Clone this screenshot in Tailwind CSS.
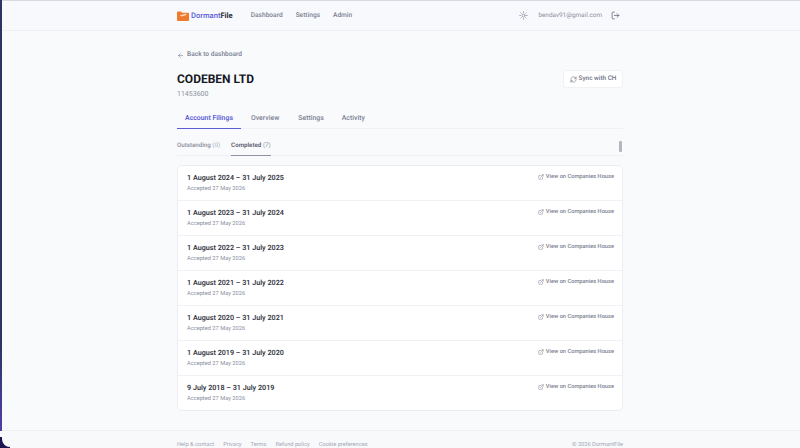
<!DOCTYPE html>
<html lang="en">
<head>
    <meta charset="UTF-8">
    <title>DormantFile</title>
    <script src="https://cdn.jsdelivr.net/npm/@tailwindcss/browser@4"></script>
</head>
<body class="bg-[#f9fafc] font-['Roboto',sans-serif] [text-rendering:geometricPrecision] antialiased overflow-hidden">
<div class="h-[448px] w-[800px] flex flex-col overflow-hidden relative">
    <div class="absolute left-0 top-0 w-[2px] h-[431px] bg-linear-to-b from-[#2b3564] via-[#2b3564] via-80% to-[#4f3fa8]"></div>

    <header class="h-[31px] shrink-0 bg-[#f8f9fc] border-t border-b border-t-[#d8dae2] border-b-[#f0f1f5] pl-[177px] pr-[180px] flex items-center justify-between">
        <div class="flex items-center">
            <svg class="w-[12px] h-[12px] mr-[2px]" viewBox="0 0 12 12"><path d="M0 2.5a1 1 0 0 1 1-1h3l1 1.2h6a1 1 0 0 1 1 1V10a1 1 0 0 1-1 1H1a1 1 0 0 1-1-1z" fill="#ee7a2d"/><path d="M2.5 5.5 9 3.5l.6 1.5-5 1.5z" fill="#fbd9c0"/></svg>
            <span class="text-[7.6px] font-medium text-[#5b5bd6]">Dormant</span><span class="text-[7.6px] font-bold text-[#2b2d3a]">File</span>
            <nav class="flex gap-[13px] ml-[18px] text-[6.6px] font-medium text-[#7b7f92]">
                <span>Dashboard</span><span>Settings</span><span>Admin</span>
            </nav>
        </div>
        <div class="flex items-center text-[#8a8ea0]">
            <svg class="w-[9px] h-[9px]" viewBox="0 0 24 24" fill="none" stroke="currentColor" stroke-width="2" stroke-linecap="round"><circle cx="12" cy="12" r="4"/><path d="M12 2v2M12 20v2M4.9 4.9l1.4 1.4M17.7 17.7l1.4 1.4M2 12h2M20 12h2M6.3 17.7l-1.4 1.4M19.1 4.9l-1.4 1.4"/></svg>
            <span class="text-[6.4px] ml-[10px] mr-[9px]">bendav91@gmail.com</span>
            <svg class="w-[9px] h-[9px]" viewBox="0 0 24 24" fill="none" stroke="#5f6375" stroke-width="2" stroke-linecap="round" stroke-linejoin="round"><path d="M9 21H5a2 2 0 0 1-2-2V5a2 2 0 0 1 2-2h4M16 17l5-5-5-5M21 12H9"/></svg>
        </div>
    </header>

    <main class="flex-1 min-h-0 pl-[177px] pr-[177px] pt-[19px]">
        <div class="flex items-center text-[6.6px] font-medium text-[#7b7f92] h-[10px]">
            <svg class="w-[7px] h-[7px] mr-[3px]" viewBox="0 0 24 24" fill="none" stroke="currentColor" stroke-width="2" stroke-linecap="round" stroke-linejoin="round"><path d="M19 12H5M12 19l-7-7 7-7"/></svg>
            Back to dashboard
        </div>
        <div class="flex justify-between items-start mt-[12px]">
            <div>
                <h1 class="text-[12px] leading-[14px] font-bold text-[#16171f]">CODEBEN LTD</h1>
                <p class="text-[7px] leading-[10px] mt-[3px] text-[#8a8ea0]">11453600</p>
            </div>
            <div class="h-[18px] w-[60px] mt-[-2px] bg-white rounded-[3px] border border-[#f0f1f5] flex items-center justify-center text-[6.4px] font-medium text-[#6c7083]">
                <svg class="w-[7px] h-[7px] mr-[2px]" viewBox="0 0 24 24" fill="none" stroke="currentColor" stroke-width="2" stroke-linecap="round" stroke-linejoin="round"><path d="M3 12a9 9 0 0 1 15-6.7L21 8M21 3v5h-5M21 12a9 9 0 0 1-15 6.7L3 16M3 21v-5h5"/></svg>
                Sync with CH
            </div>
        </div>

        <div class="flex mt-[9px] border-b border-[#f1f2f6] h-[21px] text-[6.9px] font-medium text-[#7b7f92]">
            <div class="w-[64px] text-center text-[#5b5bd6] font-semibold border-b-[1.5px] border-[#5b5bd6] h-[21px] leading-[21px]">Account Filings</div>
            <div class="ml-[10px] leading-[21px]">Overview</div>
            <div class="ml-[19px] leading-[21px]">Settings</div>
            <div class="ml-[18px] leading-[21px]">Activity</div>
        </div>

        <div class="flex justify-between mt-[11px] border-b border-[#eff0f4] h-[16px] text-[6.2px] font-medium text-[#8a8ea0] relative">
            <div class="flex gap-[11px]">
                <div class="leading-[11px]">Outstanding <span class="font-normal text-[#b0b3c0]">(0)</span></div>
                <div class="leading-[11px] h-[16px] border-b border-[#8f92a0] text-[#5a5d6e] font-semibold">Completed <span class="font-normal text-[#9296a6]">(7)</span></div>
            </div>
            <div class="absolute right-[1px] top-[1px] w-[3px] h-[11px] rounded-[1px] bg-[#b4b6bf]"></div>
        </div>

        <div class="mt-[9px] bg-white border border-[#eceef3] rounded-[5px] divide-y divide-[#f0f1f5]">
            <div class="h-[35px] pl-[9px] pr-[8px] flex justify-between">
                <div><p class="text-[7.2px] leading-[10px] mt-[7px] font-semibold text-[#34363f]">1 August 2024 – 31 July 2025</p><p class="text-[5.7px] leading-[8px] mt-[2px] text-[#8a8ea0]">Accepted 27 May 2026</p></div>
                <div class="flex items-center h-[8px] mt-[7px] text-[5.7px] font-medium text-[#7b7f92]"><svg class="w-[6px] h-[6px] mr-[2px] mt-[-1px]" viewBox="0 0 24 24" fill="none" stroke="currentColor" stroke-width="2" stroke-linecap="round" stroke-linejoin="round"><path d="M15 3h6v6M10 14 21 3M18 13v6a2 2 0 0 1-2 2H5a2 2 0 0 1-2-2V8a2 2 0 0 1 2-2h6"/></svg>View on Companies House</div>
            </div>
            <div class="h-[35px] pl-[9px] pr-[8px] flex justify-between">
                <div><p class="text-[7.2px] leading-[10px] mt-[7px] font-semibold text-[#34363f]">1 August 2023 – 31 July 2024</p><p class="text-[5.7px] leading-[8px] mt-[2px] text-[#8a8ea0]">Accepted 27 May 2026</p></div>
                <div class="flex items-center h-[8px] mt-[7px] text-[5.7px] font-medium text-[#7b7f92]"><svg class="w-[6px] h-[6px] mr-[2px] mt-[-1px]" viewBox="0 0 24 24" fill="none" stroke="currentColor" stroke-width="2" stroke-linecap="round" stroke-linejoin="round"><path d="M15 3h6v6M10 14 21 3M18 13v6a2 2 0 0 1-2 2H5a2 2 0 0 1-2-2V8a2 2 0 0 1 2-2h6"/></svg>View on Companies House</div>
            </div>
            <div class="h-[35px] pl-[9px] pr-[8px] flex justify-between">
                <div><p class="text-[7.2px] leading-[10px] mt-[7px] font-semibold text-[#34363f]">1 August 2022 – 31 July 2023</p><p class="text-[5.7px] leading-[8px] mt-[2px] text-[#8a8ea0]">Accepted 27 May 2026</p></div>
                <div class="flex items-center h-[8px] mt-[7px] text-[5.7px] font-medium text-[#7b7f92]"><svg class="w-[6px] h-[6px] mr-[2px] mt-[-1px]" viewBox="0 0 24 24" fill="none" stroke="currentColor" stroke-width="2" stroke-linecap="round" stroke-linejoin="round"><path d="M15 3h6v6M10 14 21 3M18 13v6a2 2 0 0 1-2 2H5a2 2 0 0 1-2-2V8a2 2 0 0 1 2-2h6"/></svg>View on Companies House</div>
            </div>
            <div class="h-[35px] pl-[9px] pr-[8px] flex justify-between">
                <div><p class="text-[7.2px] leading-[10px] mt-[7px] font-semibold text-[#34363f]">1 August 2021 – 31 July 2022</p><p class="text-[5.7px] leading-[8px] mt-[2px] text-[#8a8ea0]">Accepted 27 May 2026</p></div>
                <div class="flex items-center h-[8px] mt-[7px] text-[5.7px] font-medium text-[#7b7f92]"><svg class="w-[6px] h-[6px] mr-[2px] mt-[-1px]" viewBox="0 0 24 24" fill="none" stroke="currentColor" stroke-width="2" stroke-linecap="round" stroke-linejoin="round"><path d="M15 3h6v6M10 14 21 3M18 13v6a2 2 0 0 1-2 2H5a2 2 0 0 1-2-2V8a2 2 0 0 1 2-2h6"/></svg>View on Companies House</div>
            </div>
            <div class="h-[35px] pl-[9px] pr-[8px] flex justify-between">
                <div><p class="text-[7.2px] leading-[10px] mt-[7px] font-semibold text-[#34363f]">1 August 2020 – 31 July 2021</p><p class="text-[5.7px] leading-[8px] mt-[2px] text-[#8a8ea0]">Accepted 27 May 2026</p></div>
                <div class="flex items-center h-[8px] mt-[7px] text-[5.7px] font-medium text-[#7b7f92]"><svg class="w-[6px] h-[6px] mr-[2px] mt-[-1px]" viewBox="0 0 24 24" fill="none" stroke="currentColor" stroke-width="2" stroke-linecap="round" stroke-linejoin="round"><path d="M15 3h6v6M10 14 21 3M18 13v6a2 2 0 0 1-2 2H5a2 2 0 0 1-2-2V8a2 2 0 0 1 2-2h6"/></svg>View on Companies House</div>
            </div>
            <div class="h-[35px] pl-[9px] pr-[8px] flex justify-between">
                <div><p class="text-[7.2px] leading-[10px] mt-[7px] font-semibold text-[#34363f]">1 August 2019 – 31 July 2020</p><p class="text-[5.7px] leading-[8px] mt-[2px] text-[#8a8ea0]">Accepted 27 May 2026</p></div>
                <div class="flex items-center h-[8px] mt-[7px] text-[5.7px] font-medium text-[#7b7f92]"><svg class="w-[6px] h-[6px] mr-[2px] mt-[-1px]" viewBox="0 0 24 24" fill="none" stroke="currentColor" stroke-width="2" stroke-linecap="round" stroke-linejoin="round"><path d="M15 3h6v6M10 14 21 3M18 13v6a2 2 0 0 1-2 2H5a2 2 0 0 1-2-2V8a2 2 0 0 1 2-2h6"/></svg>View on Companies House</div>
            </div>
            <div class="h-[34px] pl-[9px] pr-[8px] flex justify-between">
                <div><p class="text-[7.2px] leading-[10px] mt-[7px] font-semibold text-[#34363f]">9 July 2018 – 31 July 2019</p><p class="text-[5.7px] leading-[8px] mt-[2px] text-[#8a8ea0]">Accepted 27 May 2026</p></div>
                <div class="flex items-center h-[8px] mt-[7px] text-[5.7px] font-medium text-[#7b7f92]"><svg class="w-[6px] h-[6px] mr-[2px] mt-[-1px]" viewBox="0 0 24 24" fill="none" stroke="currentColor" stroke-width="2" stroke-linecap="round" stroke-linejoin="round"><path d="M15 3h6v6M10 14 21 3M18 13v6a2 2 0 0 1-2 2H5a2 2 0 0 1-2-2V8a2 2 0 0 1 2-2h6"/></svg>View on Companies House</div>
            </div>
        </div>
    </main>

    <footer class="h-[18px] shrink-0 border-t border-[#eceef2] bg-[#f8f9fb] pl-[177px] pr-[177px] pt-[10px] flex justify-between text-[5.7px] leading-[8px] text-[#a6a9b8]">
        <div class="flex gap-[9px]"><span>Help &amp; contact</span><span>Privacy</span><span>Terms</span><span>Refund policy</span><span>Cookie preferences</span></div>
        <span>© 2026 DormantFile</span>
    </footer>

    <div class="absolute left-0 bottom-0 w-[10px] h-[11px] bg-[#1c1650] pl-[2px] pb-[1px]"><div class="h-full bg-[#f8f9fb] rounded-bl-[8px]"></div></div>
</div>
</body>
</html>
